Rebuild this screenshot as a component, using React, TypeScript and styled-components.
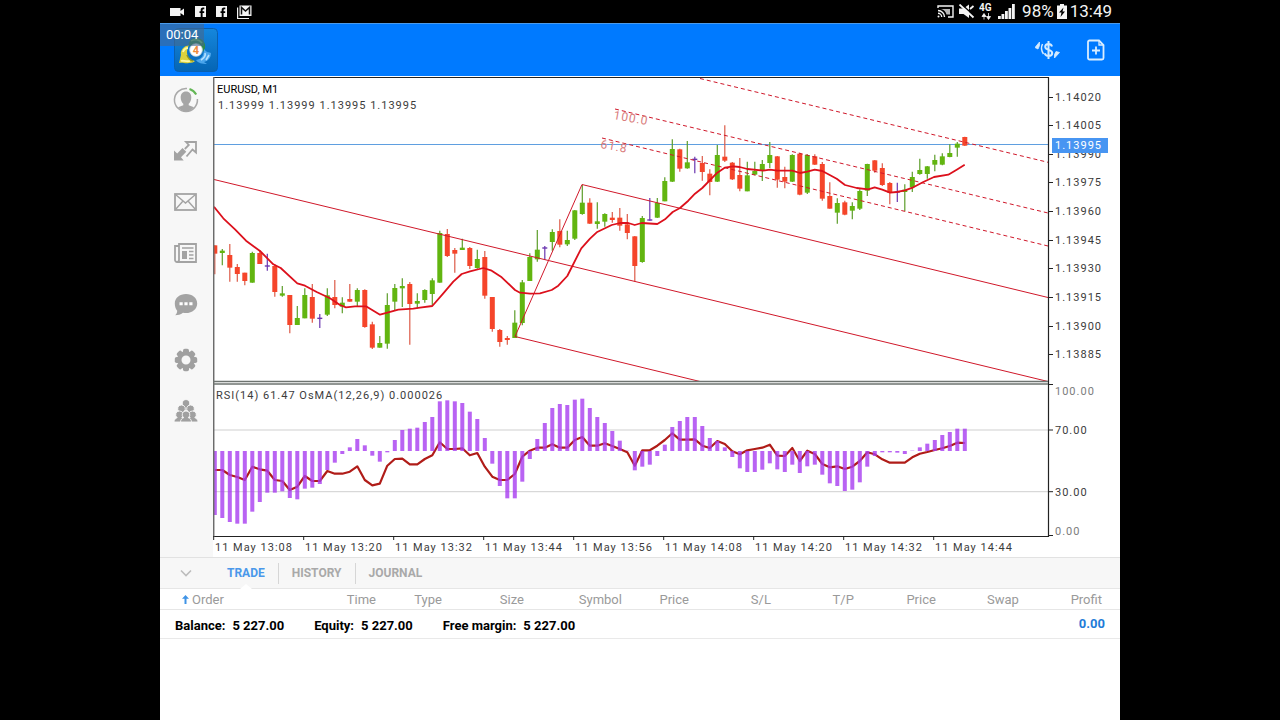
import React from "react";
import styled, { createGlobalStyle } from "styled-components";

const GlobalStyle = createGlobalStyle`
  *, *::before, *::after { box-sizing: border-box; }
  body { margin: 0; background: #000; font-family: Roboto, "Liberation Sans", sans-serif; }
  button { font-family: inherit; }
`;

const Stage = styled.div`
  display: flex;
  justify-content: center;
  min-height: 100vh;
  background: #000;
`;

const Device = styled.div`
  display: flex;
  flex-direction: column;
  width: 75%;
  background: #fff;
`;

const StatusBar = styled.header`
  display: flex;
  align-items: center;
  justify-content: space-between;
  height: 23px;
  padding: 0 8px 0 10px;
  background: #000;
  color: #f4f4f4;
`;

const StatusGroup = styled.div<{ $gap: number }>`
  display: flex;
  align-items: center;
  gap: ${(p) => p.$gap}px;
  svg { display: block; }
`;

const StatusText = styled.span`
  font-size: 17px;
  line-height: 23px;
`;

const AppBar = styled.div`
  position: relative;
  display: flex;
  align-items: center;
  justify-content: space-between;
  height: 53px;
  padding: 0 11px 1px 14px;
  background: #007aff;
  border-top: 1px solid #4b9bea;
`;

const Timer = styled.span`
  position: absolute;
  left: 0;
  top: 0;
  padding: 0 6px;
  font-size: 13px;
  line-height: 22px;
  color: #fff;
  background: rgba(70, 104, 140, 0.6);
`;

const Logo = styled.svg`
  display: block;
  width: 44px;
  height: 44px;
`;

const Actions = styled.div`
  display: flex;
  gap: 23px;
`;

const IconButton = styled.button`
  display: flex;
  align-items: center;
  justify-content: center;
  min-width: 26px;
  height: 30px;
  padding: 0;
  border: 0;
  background: none;
  color: #fff;
`;

const Workspace = styled.div`
  display: flex;
`;

const Sidebar = styled.nav`
  display: flex;
  flex-direction: column;
  flex: 0 0 53px;
  background: #f7f7f7;
`;

const SideButton = styled.button<{ $apart?: boolean }>`
  display: flex;
  align-items: center;
  justify-content: center;
  height: 51px;
  margin: ${(p) => (p.$apart ? "5px" : "0")} 0 0;
  padding: 0 2px 3px 0;
  border: 0;
  background: none;
  color: #9b9b9b;
`;

const ChartArea = styled.main`
  flex: 1;
  min-width: 0;
`;

const ChartSvg = styled.svg`
  display: block;
  width: 100%;
  height: auto;
`;

const ChartText = styled.text<{ $tone?: string; $plain?: boolean }>`
  font-family: Roboto, "Liberation Sans", sans-serif;
  font-size: 11px;
  letter-spacing: ${(p) => (p.$plain ? "normal" : "1px")};
  fill: ${(p) => p.$tone || "#3c3c3c"};
`;

const LevelText = styled(ChartText)`
  font-size: 12px;
`;

const Tabs = styled.div`
  display: flex;
  align-items: center;
  height: 32px;
  background: #f7f7f7;
  border-top: 1px solid #e2e2e2;
  border-bottom: 1px solid #e6e6e6;
`;

const Collapse = styled.button`
  display: flex;
  align-items: center;
  justify-content: center;
  width: 54px;
  height: 30px;
  padding: 0 2px 0 0;
  border: 0;
  background: none;
  color: #bcbcbc;
`;

const Tab = styled.button<{ $active?: boolean }>`
  position: relative;
  height: 30px;
  padding: 0 13px;
  border: 0;
  background: none;
  font-size: 12px;
  font-weight: 700;
  line-height: 30px;
  color: ${(p) => (p.$active ? "#4a98ea" : "#a9a9a9")};
  &::after {
    content: "";
    display: ${(p) => (p.$active ? "block" : "none")};
    position: absolute;
    left: 50%;
    bottom: -1px;
    margin-left: -6px;
    border: 6px solid transparent;
    border-top-width: 0;
    border-bottom: 5px solid #fff;
  }
`;

const Divider = styled.span`
  width: 1px;
  height: 21px;
  background: #d6d6d6;
`;

const Orders = styled.table`
  width: 100%;
  table-layout: fixed;
  border-collapse: collapse;
`;

const Col = styled.col<{ $share: number }>`
  width: ${(p) => (p.$share / 960) * 100}%;
`;

const Head = styled.th<{ $first?: boolean; $last?: boolean }>`
  height: 20px;
  padding: 1px ${(p) => (p.$last ? 18 : 0)}px 0 ${(p) => (p.$first ? 22 : 0)}px;
  border-bottom: 1px solid #e6e6e6;
  text-align: ${(p) => (p.$first ? "left" : "right")};
  font-size: 13px;
  font-weight: 400;
  line-height: 19px;
  color: #9a9a9a;
  svg { margin-right: 3px; }
`;

const SummaryCell = styled.td`
  height: 29px;
  padding: 3px 0 0 15px;
  border-bottom: 1px solid #e9e9e9;
  font-size: 13px;
  font-weight: 700;
  line-height: 25px;
  color: #000;
`;

const ProfitCell = styled(SummaryCell)`
  padding: 0 15px 1px 0;
  text-align: right;
  color: #1f7cd8;
`;

const Totals = styled.div`
  display: flex;
  gap: 30px;
`;

const Total = styled.span`
  display: flex;
  gap: 7px;
  white-space: nowrap;
`;

/* ---------- chart data ---------- */

type Candle = { kind: string; high: number; top: number; bottom: number; low: number };

const STEP = 7.5;
const X0 = 214.8;
const xAt = (i: number) => X0 + STEP * i;

// Each entry: kind (r = falling, g = rising, d = unchanged), high, body top, body bottom, low.
const readCandles = (base: number, rows: string): Candle[] =>
  rows
    .trim()
    .split(/\s+/)
    .map((row) => {
      const [high, top, bottom, low] = row.slice(1).split(",").map((v) => base + Number(v) / 3);
      return { kind: row[0], high, top, bottom, low };
    });

const CANDLES: Candle[] = [
  ...readCandles(
    170,
    `r226,226,251,313 g237,242,249,286 r222,255,293,335 r282,291,312,335 r308,308,333,346
     g245,249,338,338 r240,249,282,282 d251,288,288,302 r283,288,366,380 g348,370,377,380
     r375,375,465,490 g408,444,465,465 g355,375,445,445 r342,381,446,458 d432,445,445,474
     g355,376,434,438 r330,381,405,415 g382,398,410,430 r342,387,395,395 g355,360,395,408
     r358,360,471,473 r455,463,533,537 g498,519,533,533 g370,405,521,536 g342,354,395,420
     g325,348,355,411 r336,342,402,524 g370,393,401,415 g358,360,390,398 g325,331,372,408
     g182,189,338,338 r177,192,258,261 r234,240,251,308 g206,233,240,240 r231,234,288,297
     g239,267,294,296 r243,261,377,386 r381,381,477,485 r477,480,516,530 r498,504,510,524
     g421,458,504,504 g330,337,459,466 g250,261,333,333 g180,239,268,275 d228,234,234,270
     g178,186,216,242 r148,183,224,232 g182,210,223,228 g120,121,206,210 g45,98,132,134
     r85,98,161,162 g97,154,162,176 g130,132,155,170 r126,143,150,158 r114,143,167,182
     r132,163,189,208 r198,199,288,335`
  ),
  ...readCandles(
    76,
    `g420,426,558,560 d366,432,432,434 g366,381,425,426 g304,315,376,376 g190,219,317,318
     r218,220,278,287 g195,259,277,278 d242,250,250,292 r240,261,288,314 r280,293,318,358
     g207,237,317,318 r148,242,254,258 r258,260,310,312 r246,297,338,346 g257,298,346,346
     g257,285,296,298 g252,264,285,315 g198,237,261,276 r240,241,311,335 r272,303,317,337
     g235,237,317,318 r230,233,356,358 g235,237,350,354 r235,241,266,267 r258,264,368,374
     r319,360,398,398 g367,381,410,443 r374,379,416,418 g379,390,404,430 g340,345,398,402
     g263,264,344,360 r252,253,284,290 r262,276,327,330 r318,321,350,385 d320,348,348,378
     g325,341,348,405 g287,303,334,348 g248,282,294,296 g270,271,294,308 g236,252,266,286
     g232,241,266,268 g205,231,243,244 g198,203,215,242 r182,183,209,210`
  ),
];

const COLORS: Record<string, string> = { r: "#f5452a", g: "#62b510", d: "#6a35b0" };
const WICKS: Record<string, string> = { r: "#dd5a48", g: "#5c9d2a", d: "#6a35b0" };

const OSMA = [
  405, 414, 426, 431, 431, 395, 366, 338, 338, 334, 354, 358, 326, 323, 312, 270, 248, 222, 202, 177,
  196, 227, 245, 217, 180, 150, 146, 143, 126, 111, 64, 61, 64, 69, 95, 117, 174, 251, 318, 355,
  355, 305, 237, 177, 129, 84, 72, 75, 59, 56, 84, 111, 129, 153, 182, 212, 271, 260, 254, 228,
  194, 141, 123, 111, 111, 138, 174, 183, 202, 231, 265, 276, 276, 269, 250, 268, 276, 254, 279, 259,
  254, 284, 310, 318, 333, 329, 307, 260, 228, 217, 217, 218, 222, 212, 202, 191, 180, 165, 156, 146,
  146,
];

const RSI = [
  270, 270, 285, 291, 300, 260, 268, 272, 300, 303, 330, 320, 288, 303, 303, 273, 281, 281, 275, 259,
  300, 316, 311, 257, 237, 236, 253, 253, 237, 226, 187, 207, 207, 205, 226, 219, 260, 290, 300, 300,
  282, 230, 212, 203, 203, 193, 203, 203, 180, 171, 197, 197, 190, 198, 207, 217, 257, 211, 211, 197,
  180, 160, 179, 179, 178, 197, 204, 183, 192, 214, 223, 211, 207, 203, 194, 227, 228, 204, 243, 212,
  222, 252, 262, 259, 267, 260, 243, 217, 223, 238, 248, 248, 248, 232, 221, 216, 210, 205, 198, 188,
  189,
];

const readPoints = (x: number, y: number, rows: string) =>
  rows.split(" ").map((pair) => {
    const [px, py] = pair.split(",").map(Number);
    return `${(x + px / 3).toFixed(1)},${(y + py / 3).toFixed(1)}`;
  });

const AVERAGE = [
  ...readPoints(210, 170, "12,110 40,145 75,178 108,212 150,243 190,283 212,294 262,340 285,347 320,366 360,385 390,405 408,412 435,409 468,409 510,434 535,427 565,419 610,416"),
  ...readPoints(420, 170, "0,413 37,408 70,370 100,335 125,312 150,304 190,294 215,302 245,322 285,360 300,368 330,371 360,370 395,360 415,347 442,318 484,235 510,206 530,187 575,165 600,159 625,159"),
  ...readPoints(590, 76, "134,447 155,441 202,444 225,430 248,408 270,396 295,374 315,353 337,336 382,290 404,275 430,271 449,273 472,279 520,284 540,281 562,284 607,284 630,291 652,287"),
  ...readPoints(790, 76, "74,281 97,285 140,308 165,327 200,336 235,340 254,334 277,341 300,350 320,348 345,343 370,334 400,318 432,303 475,296 500,281 524,266"),
].join(" ");

const PRICES: [string, number][] = [
  ["1.14020", 97], ["1.14005", 125], ["1.13990", 154], ["1.13975", 182], ["1.13960", 211],
  ["1.13945", 240], ["1.13930", 268], ["1.13915", 297], ["1.13900", 326], ["1.13885", 354],
];

const TIMES = ["13:08", "13:20", "13:32", "13:44", "13:56", "14:08", "14:20", "14:32", "14:44"];

const CandleMark = ({ c, i }: { c: Candle; i: number }) => {
  const x = xAt(i);
  return (
    <g>
      <line x1={x} x2={x} y1={c.high} y2={c.low} stroke={WICKS[c.kind]} strokeWidth="1.2" />
      {c.kind === "d" ? (
        <line x1={x - 2.5} x2={x + 2.5} y1={c.top} y2={c.top} stroke={COLORS.d} strokeWidth="1.4" />
      ) : (
        <rect x={x - 2.5} y={c.top} width="5" height={c.bottom - c.top} fill={COLORS[c.kind]} />
      )}
    </g>
  );
};

const Chart = () => (
  <ChartSvg viewBox="213 76 907 481" role="img" aria-label="EURUSD one minute chart">
    <defs>
      <clipPath id="plot"><rect x="214" y="78" width="834" height="303" /></clipPath>
      <clipPath id="indicator"><rect x="214" y="385" width="834" height="151" /></clipPath>
    </defs>
    <rect x="213" y="76" width="907" height="481" fill="#fff" />

    <g clipPath="url(#plot)">
      <line x1="214" x2="1048" y1="144.500" y2="144.500" stroke="#5f9fe0" strokeWidth="1.200" />
      {CANDLES.map((c, i) => <CandleMark key={i} c={c} i={i} />)}
      <g stroke="#d0182a" strokeWidth="1" fill="none">
        <path d="M214 179.500L1048 381.500" />
        <path d="M700 381.500L515 336.500L582 184.500L1048 297.500" />
        <path d="M700 78.500L1048 162.300M615 109L1048 213M602 138L1048 246" strokeDasharray="4 3" />
      </g>
      <polyline points={AVERAGE} fill="none" stroke="#dc101c" strokeWidth="1.800" strokeLinejoin="round" />
      <LevelText x="613" y="119" $tone="#d97c7c" transform="rotate(10 613 119)">100.0</LevelText>
      <LevelText x="600" y="148" $tone="#d97c7c" transform="rotate(10 600 148)">61.8</LevelText>
    </g>

    <g clipPath="url(#indicator)">
      <path d="M214 430H1048M214 491.700H1048" stroke="#cfcfcf" />
      <polyline
        points={RSI.map((v, i) => `${xAt(i)},${(380 + v / 3).toFixed(1)}`).join(" ")}
        fill="none" stroke="#b01c18" strokeWidth="2.200" strokeLinejoin="round"
      />
      {OSMA.map((v, i) => {
        const y = 380 + v / 3;
        return (
          <rect key={i} x={xAt(i) - 2} y={Math.min(y, 451)} width="4" height={Math.abs(y - 451)} fill="#a83cf0" fillOpacity="0.8" />
        );
      })}
    </g>

    <g fill="none" stroke="#222">
      <path d="M213 77.500H1048.500V536.500H213" strokeWidth="1.200" />
      <path d="M213.700 77V537" stroke="#6b6b6b" strokeWidth="1.500" />
      <path d="M213 381.500H1048M213 384H1048" stroke="#6e7470" strokeWidth="1.400" />
      {PRICES.map(([p, y]) => <path key={p} d={`M1048 ${y}.5h5`} />)}
      <path d="M1048 384.500h5M1048 430h5M1048 491.700h5M1048 535.500h5" />
      {TIMES.map((t, i) => <path key={t} d={`M${213.7 + i * 90} 536v4`} />)}
    </g>

    <ChartText x="217" y="93" $plain $tone="#000">EURUSD, M1</ChartText>
    <ChartText x="218" y="109">1.13999 1.13999 1.13995 1.13995</ChartText>
    <ChartText x="216" y="399">RSI(14) 61.47 OsMA(12,26,9) 0.000026</ChartText>
    {PRICES.map(([p, y]) => <ChartText key={p} x="1055" y={y + 4}>{p}</ChartText>)}
    <rect x="1052" y="138" width="56" height="15" fill="#4795f2" />
    <ChartText x="1055" y="149" $tone="#fff">1.13995</ChartText>
    <ChartText x="1055" y="395" $tone="#7c7c7c">100.00</ChartText>
    <ChartText x="1055" y="434">70.00</ChartText>
    <ChartText x="1055" y="496">30.00</ChartText>
    <ChartText x="1055" y="535" $tone="#7c7c7c">0.00</ChartText>
    {TIMES.map((t, i) => <ChartText key={t} x={215 + i * 90} y="551">{`11 May ${t}`}</ChartText>)}
  </ChartSvg>
);

/* ---------- icons ---------- */

const FacebookMark = () => (
  <svg width="11" height="11" viewBox="0 0 11 11">
    <path d="M0 0h11v11H7.600V7h1.600V5.200H7.600V4.100c0-.6.3-.8.9-.8h.8V1.600H8C6.400 1.600 5.700 2.500 5.700 3.900v1.300H4.500V7h1.200v4H0z" fill="#f4f4f4" />
  </svg>
);

const StatusIconsLeft = () => (
  <StatusGroup $gap={10}>
    <svg width="15" height="10" viewBox="0 0 15 10">
      <path d="M0 1h10.500v3l3.500-2.500v7L10.500 6v3H0z" fill="#f4f4f4" />
    </svg>
    <FacebookMark />
    <FacebookMark />
    <svg width="15" height="14" viewBox="0 0 15 14">
      <path d="M.6 2.500v11H12" fill="none" stroke="#f4f4f4" strokeWidth="1.200" />
      <rect x="2.500" y=".5" width="12" height="10.500" fill="#f4f4f4" />
      <path d="M4.500 9.500V2.500l4 3.500 4-3.500v7" fill="none" stroke="#111" strokeWidth="1.500" />
    </svg>
  </StatusGroup>
);

const StatusIconsRight = () => (
  <StatusGroup $gap={7}>
    <StatusGroup $gap={4}>
      <svg width="17" height="13" viewBox="0 0 17 13" fill="none" stroke="#f4f4f4" strokeWidth="1.400">
        <path d="M1 3V1h15v11h-5M1 5.500A6.500 6.500 0 0 1 7.500 12M1 8.300A3.700 3.700 0 0 1 4.700 12" />
        <path d="M4 4h9v5.500h-3.500C9 7 7 4.800 4 4z" fill="#f4f4f4" stroke="none" opacity=".75" />
        <circle cx="1.500" cy="11.500" r="1" fill="#f4f4f4" stroke="none" />
      </svg>
      <svg width="17" height="15" viewBox="0 0 17 15">
        <path d="M1 4.500h4.500L11 .5V14L5.500 10H1z" fill="#f4f4f4" />
        <path d="M2.500 -.5l14 12.500" stroke="#000" strokeWidth="1.500" />
        <path d="M1.500 .5L15.500 13.500M12 5l3.500-3" stroke="#f4f4f4" strokeWidth="1.800" />
      </svg>
      <svg width="15" height="17" viewBox="0 0 15 17">
        <text x="0" y="8" fontFamily="Roboto, sans-serif" fontWeight="700" fontSize="10" fill="#f4f4f4">4G</text>
        <path d="M5 11.500v5M3 13.500l2-3 2 3zM9.500 10v5M7.500 13.500l2 3 2-3z" fill="#f4f4f4" stroke="#f4f4f4" strokeWidth=".8" />
      </svg>
      <svg width="17" height="15" viewBox="0 0 17 15" fill="#f4f4f4">
        <path d="M0 12h2.800v3H0zM3.500 10h2.800v5H3.500zM7 7h2.800v8H7zM10.500 4h2.800v11h-2.800zM14 0h2.800v15H14z" />
      </svg>
    </StatusGroup>
    <StatusGroup $gap={3}>
      <StatusText>98%</StatusText>
      <svg width="10" height="15" viewBox="0 0 10 15">
        <path d="M3 0h4v1.500h3V15H0V1.500h3z" fill="#f4f4f4" />
        <path d="M6.500 3.500L2 8.500h2.500l-1 4.500L8 7.500H5.500z" fill="#000" />
      </svg>
      <StatusText>13:49</StatusText>
    </StatusGroup>
  </StatusGroup>
);

const AppLogo = () => (
  <Logo viewBox="0 0 44 44">
    <defs>
      <linearGradient id="tile" x1="0" y1="0" x2="0" y2="1">
        <stop offset="0" stopColor="#1587dd" />
        <stop offset="1" stopColor="#0565b4" />
      </linearGradient>
    </defs>
    <rect x=".5" y=".5" width="43" height="43" rx="4" fill="url(#tile)" stroke="#0a5fae" />
    <path d="M15 18c-1-4 2-8 7-8 6 0 10 4 9 10l-2 4c-1-5-4-7-7-7-2 0-4 0-7 1z" fill="#2f8a4a" />
    <path d="M17 13c3-2 8-2 11 2" stroke="#79c56a" strokeWidth="1.500" fill="none" />
    <path d="M15 17c-5 1-9 5-8 10l-2 8c4-1 6 1 10 0 3 0 5-1 6-2-5-1-8-4-8-9 0-3 1-5 2-7z" fill="#ddd23c" />
    <path d="M9 24c1-3 3-4 5-4M7 33c2-1 5 1 9 0" stroke="#fff9a6" strokeWidth="1.800" fill="none" />
    <path d="M13 27c1 3 3 5 6 6" stroke="#8f9526" strokeWidth="1.500" fill="none" />
    <path d="M30 21c3 4 5 3 7 4 0 5-3 8-7 9l3 2c-5 0-9-1-11-4 6-1 8-5 8-11z" fill="#4aa5ec" />
    <path d="M31 25c1 3-1 5-4 7M35 27l-3 5" stroke="#b5e0ff" strokeWidth="1.600" fill="none" />
    <circle cx="22" cy="22" r="6.300" fill="#fff" stroke="#ccd6da" strokeWidth=".8" />
    <text x="22" y="26" textAnchor="middle" fontFamily="Roboto, sans-serif" fontWeight="700" fontSize="11" fill="#ee8a3c">4</text>
  </Logo>
);

const CurrencyIcon = () => (
  <svg width="25" height="20" viewBox="0 0 25 20" fill="none" stroke="#d5ebff" strokeWidth="2">
    <path d="M17 6.500C16.500 4.800 15.300 4 13.500 4c-2 0-3.300 1-3.300 2.800 0 4 7 2.200 7 6.200 0 2-1.700 3-3.700 3-2 0-3.300-1-3.800-2.700M13.500 1v18" />
    <path d="M7.500 4C6 7 6.500 11 8.500 14" strokeWidth="1.500" />
    <path d="M0 7.500L4.500 2v3.500L3 9z" fill="#d5ebff" strokeWidth=".8" />
    <path d="M24.500 12.500L19.500 18v-3.500l1.500-3z" fill="#d5ebff" strokeWidth=".8" />
  </svg>
);

const NewOrderIcon = () => (
  <svg width="18" height="22" viewBox="0 0 18 22" fill="none" stroke="#d9edff" strokeWidth="1.800">
    <path d="M2.500 1.500H12l4.500 4.500v13a1.500 1.500 0 0 1-1.500 1.500H2.500A1.500 1.500 0 0 1 1 19V3a1.500 1.500 0 0 1 1.500-1.500z" />
    <path d="M12 1.500V6h4.500" strokeWidth="1.300" />
    <path d="M9 7.500v8M5 11.500h8" />
  </svg>
);

const AccountIcon = () => (
  <svg width="26" height="26" viewBox="0 0 26 26">
    <path d="M14 1.500A11.500 11.500 0 1 0 24.400 12" fill="none" stroke="#a9a9a9" strokeWidth="1.500" />
    <path d="M16.500 2A11.500 11.500 0 0 1 23.200 7.500" fill="none" stroke="#63b655" strokeWidth="2" />
    <path d="M13 4.500c3.500 0 5.300 2.500 5.300 6 0 2.800-1.200 5.200-2.600 6.300v1.400l5.300 2A11.300 11.300 0 0 1 13 24.500 11.300 11.300 0 0 1 5 20.200l5.300-2v-1.400c-1.400-1.100-2.600-3.500-2.600-6.300 0-3.500 1.800-6 5.300-6z" fill="#a6a6a6" />
  </svg>
);

const TradeIcon = () => (
  <svg width="24" height="22" viewBox="0 0 24 22">
    <path d="M0 20.500v-10l3.200 3 5.300-5.500 3.800 3.800-5.300 5.500 2.700 3.200z" fill="#a3a3a3" />
    <path d="M12.500 16.500l6-7 3.500 3V2H12l2.800 3-4 4" fill="none" stroke="#a3a3a3" strokeWidth="1.800" />
  </svg>
);

const MailIcon = () => (
  <svg width="23" height="18" viewBox="0 0 23 18" fill="none" stroke="#a3a3a3" strokeWidth="1.800">
    <rect x="1" y="1" width="21" height="16" />
    <path d="M1.500 1.500l10 8.500 10-8.500M1.500 16.500L9 8M21.500 16.500L14 8" strokeWidth="1.400" />
  </svg>
);

const NewsIcon = () => (
  <svg width="23" height="20" viewBox="0 0 23 20" fill="none" stroke="#a3a3a3" strokeWidth="1.800">
    <path d="M5 1h17v18H3a2 2 0 0 1-2-2V3h4zM5 3v14c0 1-.5 2-2 2" />
    <path d="M8 5h11.500M15 8.500h4.500M15 12h4.500M15 15.500h4.500" strokeWidth="1.500" />
    <rect x="8" y="8" width="5" height="8" fill="#a3a3a3" stroke="none" />
  </svg>
);

const ChatIcon = () => (
  <svg width="24" height="23" viewBox="0 0 24 23">
    <path d="M12 1c6.400 0 11.200 4 11.200 9.400S18.400 20 12 20c-1 0-2 0-3-.3C6.500 21.500 4 22.200 1.200 22.200c1.300-1.300 2-2.700 2-4.500C1.600 15.800.8 13.300.8 10.400.8 5 5.600 1 12 1z" fill="#a3a3a3" />
    <path d="M5.500 9.200h3.200v3H5.500zM10.400 9.200h3.200v3h-3.200zM15.300 9.200h3.200v3h-3.200z" fill="#fff" />
  </svg>
);

const GearIcon = () => (
  <svg width="24" height="24" viewBox="0 0 24 24">
    <circle cx="12" cy="12" r="6.700" fill="none" stroke="#a0a0a0" strokeWidth="4.400" />
    {[0, 45, 90, 135, 180, 225, 270, 315].map((a) => (
      <rect key={a} x="9" y=".8" width="6" height="5" rx="1.800" fill="#a0a0a0" transform={`rotate(${a} 12 12)`} />
    ))}
  </svg>
);

const Person = ({ x, y }: { x: number; y: number }) => (
  <g transform={`translate(${x} ${y})`}>
    <path d="M-5.500 9c0-2.400 1.600-3.800 3.200-4.300A3.700 3.700 0 0 1 0-2 3.700 3.700 0 0 1 2.300 4.700C3.900 5.200 5.500 6.600 5.500 9z" fill="#a0a0a0" stroke="#f7f7f7" strokeWidth=".9" />
  </g>
);

const CommunityIcon = () => (
  <svg width="24" height="24" viewBox="0 0 24 24">
    <Person x={12} y={2.5} />
    <Person x={7.5} y={8} />
    <Person x={16.500} y={8} />
    <Person x={5.500} y={14} />
    <Person x={18.500} y={14} />
    <Person x={12} y={14} />
  </svg>
);

const SIDE_ITEMS = [
  { label: "Account", Icon: AccountIcon },
  { label: "Trade", Icon: TradeIcon },
  { label: "Mailbox", Icon: MailIcon },
  { label: "News", Icon: NewsIcon },
  { label: "Messages", Icon: ChatIcon },
  { label: "Settings", Icon: GearIcon, apart: true },
  { label: "Community", Icon: CommunityIcon },
];

const COLUMNS: [string, number][] = [
  ["Order", 140], ["Time", 76], ["Type", 66], ["Size", 82], ["Symbol", 98], ["Price", 67],
  ["S/L", 82], ["T/P", 83], ["Price", 82], ["Swap", 83], ["Profit", 101],
];

const TOTALS = [["Balance:", "5 227.00"], ["Equity:", "5 227.00"], ["Free margin:", "5 227.00"]];

export default function App() {
  return (
    <Stage>
      <GlobalStyle />
      <Device>
        <StatusBar>
          <StatusIconsLeft />
          <StatusIconsRight />
        </StatusBar>
        <AppBar>
          <AppLogo />
          <Timer>00:04</Timer>
          <Actions>
            <IconButton aria-label="Symbols"><CurrencyIcon /></IconButton>
            <IconButton aria-label="New order"><NewOrderIcon /></IconButton>
          </Actions>
        </AppBar>
        <Workspace>
          <Sidebar>
            {SIDE_ITEMS.map(({ label, Icon, apart }) => (
              <SideButton key={label} aria-label={label} $apart={apart}><Icon /></SideButton>
            ))}
          </Sidebar>
          <ChartArea><Chart /></ChartArea>
        </Workspace>
        <Tabs>
          <Collapse aria-label="Collapse panel">
            <svg width="12" height="8" viewBox="0 0 12 8" fill="none" stroke="currentColor" strokeWidth="1.600">
              <path d="M1 1.500l5 5 5-5" />
            </svg>
          </Collapse>
          <Tab $active>TRADE</Tab>
          <Divider />
          <Tab>HISTORY</Tab>
          <Divider />
          <Tab>JOURNAL</Tab>
        </Tabs>
        <Orders>
          <colgroup>
            {COLUMNS.map(([, share], i) => <Col key={i} $share={share} />)}
          </colgroup>
          <thead>
            <tr>
              {COLUMNS.map(([name], i) => (
                <Head key={i} scope="col" $first={i === 0} $last={i === COLUMNS.length - 1}>
                  {i === 0 && (
                    <svg width="7" height="9" viewBox="0 0 7 9">
                      <path d="M3.500 0L7 3.800H4.500V9h-2V3.800H0z" fill="#3f93e6" />
                    </svg>
                  )}
                  {name}
                </Head>
              ))}
            </tr>
          </thead>
          <tbody>
            <tr>
              <SummaryCell colSpan={10}>
                <Totals>
                  {TOTALS.map(([name, value]) => (
                    <Total key={name}><span>{name}</span><span>{value}</span></Total>
                  ))}
                </Totals>
              </SummaryCell>
              <ProfitCell>0.00</ProfitCell>
            </tr>
          </tbody>
        </Orders>
      </Device>
    </Stage>
  );
}
